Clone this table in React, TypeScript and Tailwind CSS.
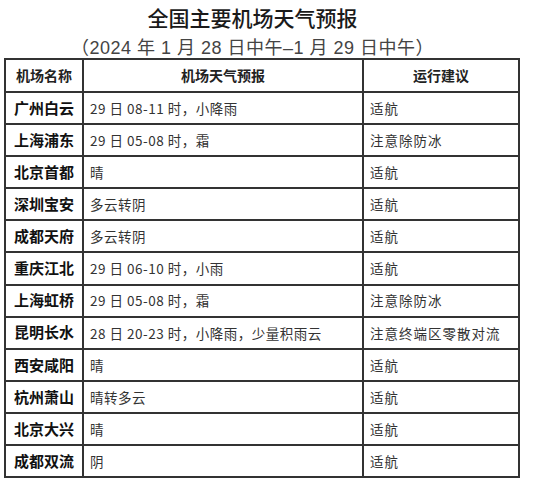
const rows: [string, string, string][] = [
  ["广州白云", "29 日 08-11 时，小降雨", "适航"],
  ["上海浦东", "29 日 05-08 时，霜", "注意除防冰"],
  ["北京首都", "晴", "适航"],
  ["深圳宝安", "多云转阴", "适航"],
  ["成都天府", "多云转阴", "适航"],
  ["重庆江北", "29 日 06-10 时，小雨", "适航"],
  ["上海虹桥", "29 日 05-08 时，霜", "注意除防冰"],
  ["昆明长水", "28 日 20-23 时，小降雨，少量积雨云", "注意终端区零散对流"],
  ["西安咸阳", "晴", "适航"],
  ["杭州萧山", "晴转多云", "适航"],
  ["北京大兴", "晴", "适航"],
  ["成都双流", "阴", "适航"],
];

export default function App() {
  return (
    <div className="h-[500px] w-[541px] bg-white font-['Noto_Sans_CJK_SC',sans-serif] text-[#222]">
      <h1 className="pt-[5px] pr-[36px] text-center text-[21px] leading-[24px] font-medium text-[#1a1a1a]">
        全国主要机场天气预报
      </h1>
      <p className="mt-[9px] pr-[36px] text-center text-[18px] leading-[20px] tracking-[0.5px] text-[#444] font-['Liberation_Sans','Noto_Sans_CJK_SC',sans-serif]">
        （2024 年 1 月 28 日中午–1 月 29 日中午）
      </p>
      <table className="ml-[4px] w-[514px] table-fixed border-collapse border-2 border-[#333]">
        <colgroup>
          <col className="w-[78px]" />
          <col className="w-[280px]" />
          <col className="w-[156px]" />
        </colgroup>
        <thead>
          <tr className="h-[33px]">
            <th className="border-2 border-[#333] text-center text-[14px] font-bold">机场名称</th>
            <th className="border-2 border-[#333] text-center text-[14px] font-bold">机场天气预报</th>
            <th className="border-2 border-[#333] text-center text-[14px] font-bold">运行建议</th>
          </tr>
        </thead>
        <tbody>
          {rows.map(([name, weather, advice]) => (
            <tr key={name} className="h-[32.1px]">
              <td className="border-2 border-[#333] text-center text-[15px] font-bold text-[#111]">{name}</td>
              <td className="border-2 border-[#333] pl-[6px] text-[13.5px] tracking-[0.5px] text-[#333]">{weather}</td>
              <td className="border-2 border-[#333] pl-[6px] text-[13.5px] tracking-[1px] text-[#333]">{advice}</td>
            </tr>
          ))}
        </tbody>
      </table>
    </div>
  );
}
